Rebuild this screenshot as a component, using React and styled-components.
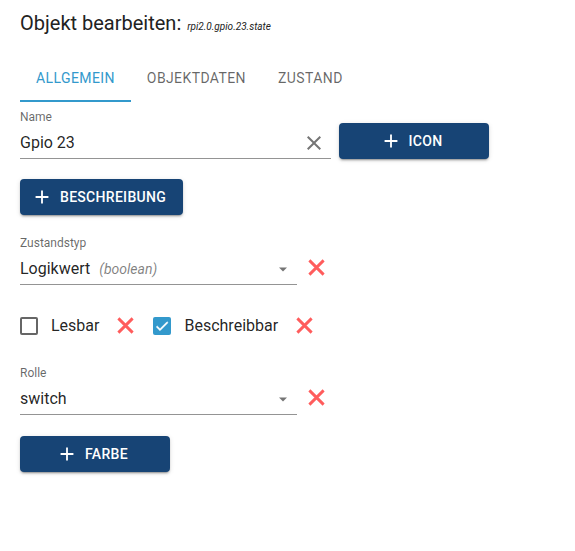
import React from 'react'
import styled, { createGlobalStyle } from 'styled-components'

const Global = createGlobalStyle`
    body {
        margin: 0;
        background: #ffffff;
        font-family: Roboto, "Liberation Sans", sans-serif;
        color: rgba(0, 0, 0, 0.87);
    }
`

const Page = styled.div`
    padding: 11px 20px 40px 20px;
`

const Title = styled.h2`
    margin: 0;
    height: 24px;
    font-size: 20px;
    line-height: 24px;
    font-weight: 400;
    color: #222222;
`

const TitleId = styled.span`
    font-size: 10px;
    line-height: 1;
    font-style: italic;
    margin-left: 6px;
`

const TabBar = styled.div`
    display: flex;
    margin-top: 19px;
    height: 48px;
`

const Tab = styled.div`
    position: relative;
    box-sizing: border-box;
    display: flex;
    align-items: center;
    justify-content: center;
    padding: 0 16px;
    min-width: 90px;
    font-size: 14px;
    font-weight: 400;
    letter-spacing: 0.4px;
    text-transform: uppercase;
    color: ${p => (p.$active ? '#3399cc' : 'rgba(0, 0, 0, 0.6)')};
    &::after {
        content: '';
        display: ${p => (p.$active ? 'block' : 'none')};
        position: absolute;
        left: 0;
        right: 0;
        bottom: 0;
        height: 2px;
        background: #3399cc;
    }
`

const Row = styled.div`
    display: flex;
    align-items: ${p => p.$align || 'flex-start'};
    margin-top: ${p => p.$top || 0}px;
`

const Field = styled.div`
    width: ${p => p.$width}px;
    display: flex;
    flex-direction: column;
`

const Label = styled.label`
    font-size: 12px;
    line-height: 14px;
    color: rgba(0, 0, 0, 0.6);
`

const InputLine = styled.div`
    display: flex;
    align-items: center;
    margin-top: 9px;
    height: 19px;
    padding-bottom: 6px;
    border-bottom: 1px solid #949494;
    font-size: 16px;
    line-height: 19px;
`

const Value = styled.span`
    flex: 1;
    white-space: nowrap;
`

const Hint = styled.span`
    font-size: 14px;
    font-style: italic;
    color: rgba(0, 0, 0, 0.5);
    margin-left: 9px;
`

const ClearIcon = styled.svg`
    width: 24px;
    height: 24px;
    margin-right: 5px;
    fill: #757575;
`

const Arrow = styled.svg`
    width: 24px;
    height: 24px;
    margin-right: 2px;
    fill: #757575;
`

const RemoveBox = styled.div`
    display: flex;
    align-items: center;
    height: 36px;
`

const RedX = styled.svg`
    width: 19px;
    height: 19px;
    margin-left: ${p => p.$left || 0}px;
    stroke: #ff5c5c;
    stroke-width: 3;
    flex-shrink: 0;
`

const Button = styled.button`
    display: inline-flex;
    align-items: center;
    justify-content: center;
    height: 36px;
    min-width: ${p => p.$min || 0}px;
    padding: 0 17px 0 11px;
    margin-top: ${p => p.$top || 0}px;
    margin-left: ${p => p.$left || 0}px;
    border: none;
    border-radius: 4px;
    background: #174475;
    color: #ffffff;
    font-family: Roboto, "Liberation Sans", sans-serif;
    font-size: 14px;
    font-weight: 500;
    letter-spacing: 0.3px;
    text-transform: uppercase;
    box-shadow: 0px 3px 1px -2px rgba(0, 0, 0, 0.2), 0px 2px 2px 0px rgba(0, 0, 0, 0.14),
        0px 1px 5px 0px rgba(0, 0, 0, 0.12);
    cursor: pointer;
`

const PlusIcon = styled.svg`
    width: 22px;
    height: 22px;
    margin-right: 7px;
    fill: #ffffff;
`

const Check = styled.span`
    box-sizing: border-box;
    width: 18px;
    height: 18px;
    border-radius: 2px;
    border: ${p => (p.$checked ? 'none' : '2px solid #666666')};
    background: ${p => (p.$checked ? '#3399cc' : 'transparent')};
    display: flex;
    align-items: center;
    justify-content: center;
    margin-left: ${p => p.$left || 0}px;
`

const CheckText = styled.span`
    font-size: 16px;
    margin-left: 13px;
`

const Plus = () => (
    <PlusIcon viewBox="0 0 24 24">
        <path d="M19 13h-6v6h-2v-6H5v-2h6V5h2v6h6v2z" />
    </PlusIcon>
)

const Remove = ({ left }) => (
    <RedX viewBox="0 0 20 20" $left={left}>
        <path d="M2.5 2.5 L17.5 17.5 M17.5 2.5 L2.5 17.5" fill="none" />
    </RedX>
)

const DropArrow = () => (
    <Arrow viewBox="0 0 24 24">
        <path d="M8 10.5l4 4 4-4z" />
    </Arrow>
)

const App = () => {
    return (
        <Page>
            <Global />
            <Title>
                Objekt bearbeiten:<TitleId>rpi2.0.gpio.23.state</TitleId>
            </Title>
            <TabBar>
                <Tab $active>Allgemein</Tab>
                <Tab>Objektdaten</Tab>
                <Tab>Zustand</Tab>
            </TabBar>

            <Row $top={8}>
                <Field $width={311}>
                    <Label>Name</Label>
                    <InputLine>
                        <Value>Gpio 23</Value>
                        <ClearIcon viewBox="0 0 24 24">
                            <path d="M19 6.41 17.59 5 12 10.59 6.41 5 5 6.41 10.59 12 5 17.59 6.41 19 12 13.41 17.59 19 19 17.59 13.41 12z" />
                        </ClearIcon>
                    </InputLine>
                </Field>
                <Button $min={150} $left={8} $top={13}>
                    <Plus />
                    Icon
                </Button>
            </Row>

            <Button $top={20}>
                <Plus />
                Beschreibung
            </Button>

            <Row $top={21} $align="flex-end">
                <Field $width={277}>
                    <Label>Zustandstyp</Label>
                    <InputLine>
                        <Value>
                            Logikwert<Hint>(boolean)</Hint>
                        </Value>
                        <DropArrow />
                    </InputLine>
                </Field>
                <RemoveBox>
                    <Remove left={10} />
                </RemoveBox>
            </Row>

            <Row $top={31} $align="center">
                <Check />
                <CheckText>Lesbar</CheckText>
                <Remove left={17} />
                <Check $checked $left={18}>
                    <svg width="16" height="16" viewBox="0 0 24 24">
                        <path d="M9 16.17 4.83 12l-1.42 1.41L9 19 21 7l-1.41-1.41z" fill="#ffffff" stroke="#ffffff" strokeWidth="0.8" />
                    </svg>
                </Check>
                <CheckText>Beschreibbar</CheckText>
                <Remove left={17} />
            </Row>

            <Row $top={31} $align="flex-end">
                <Field $width={277}>
                    <Label>Rolle</Label>
                    <InputLine>
                        <Value>switch</Value>
                        <DropArrow />
                    </InputLine>
                </Field>
                <RemoveBox>
                    <Remove left={10} />
                </RemoveBox>
            </Row>

            <Button $min={150} $top={21}>
                <Plus />
                Farbe
            </Button>
        </Page>
    )
}

export default App
